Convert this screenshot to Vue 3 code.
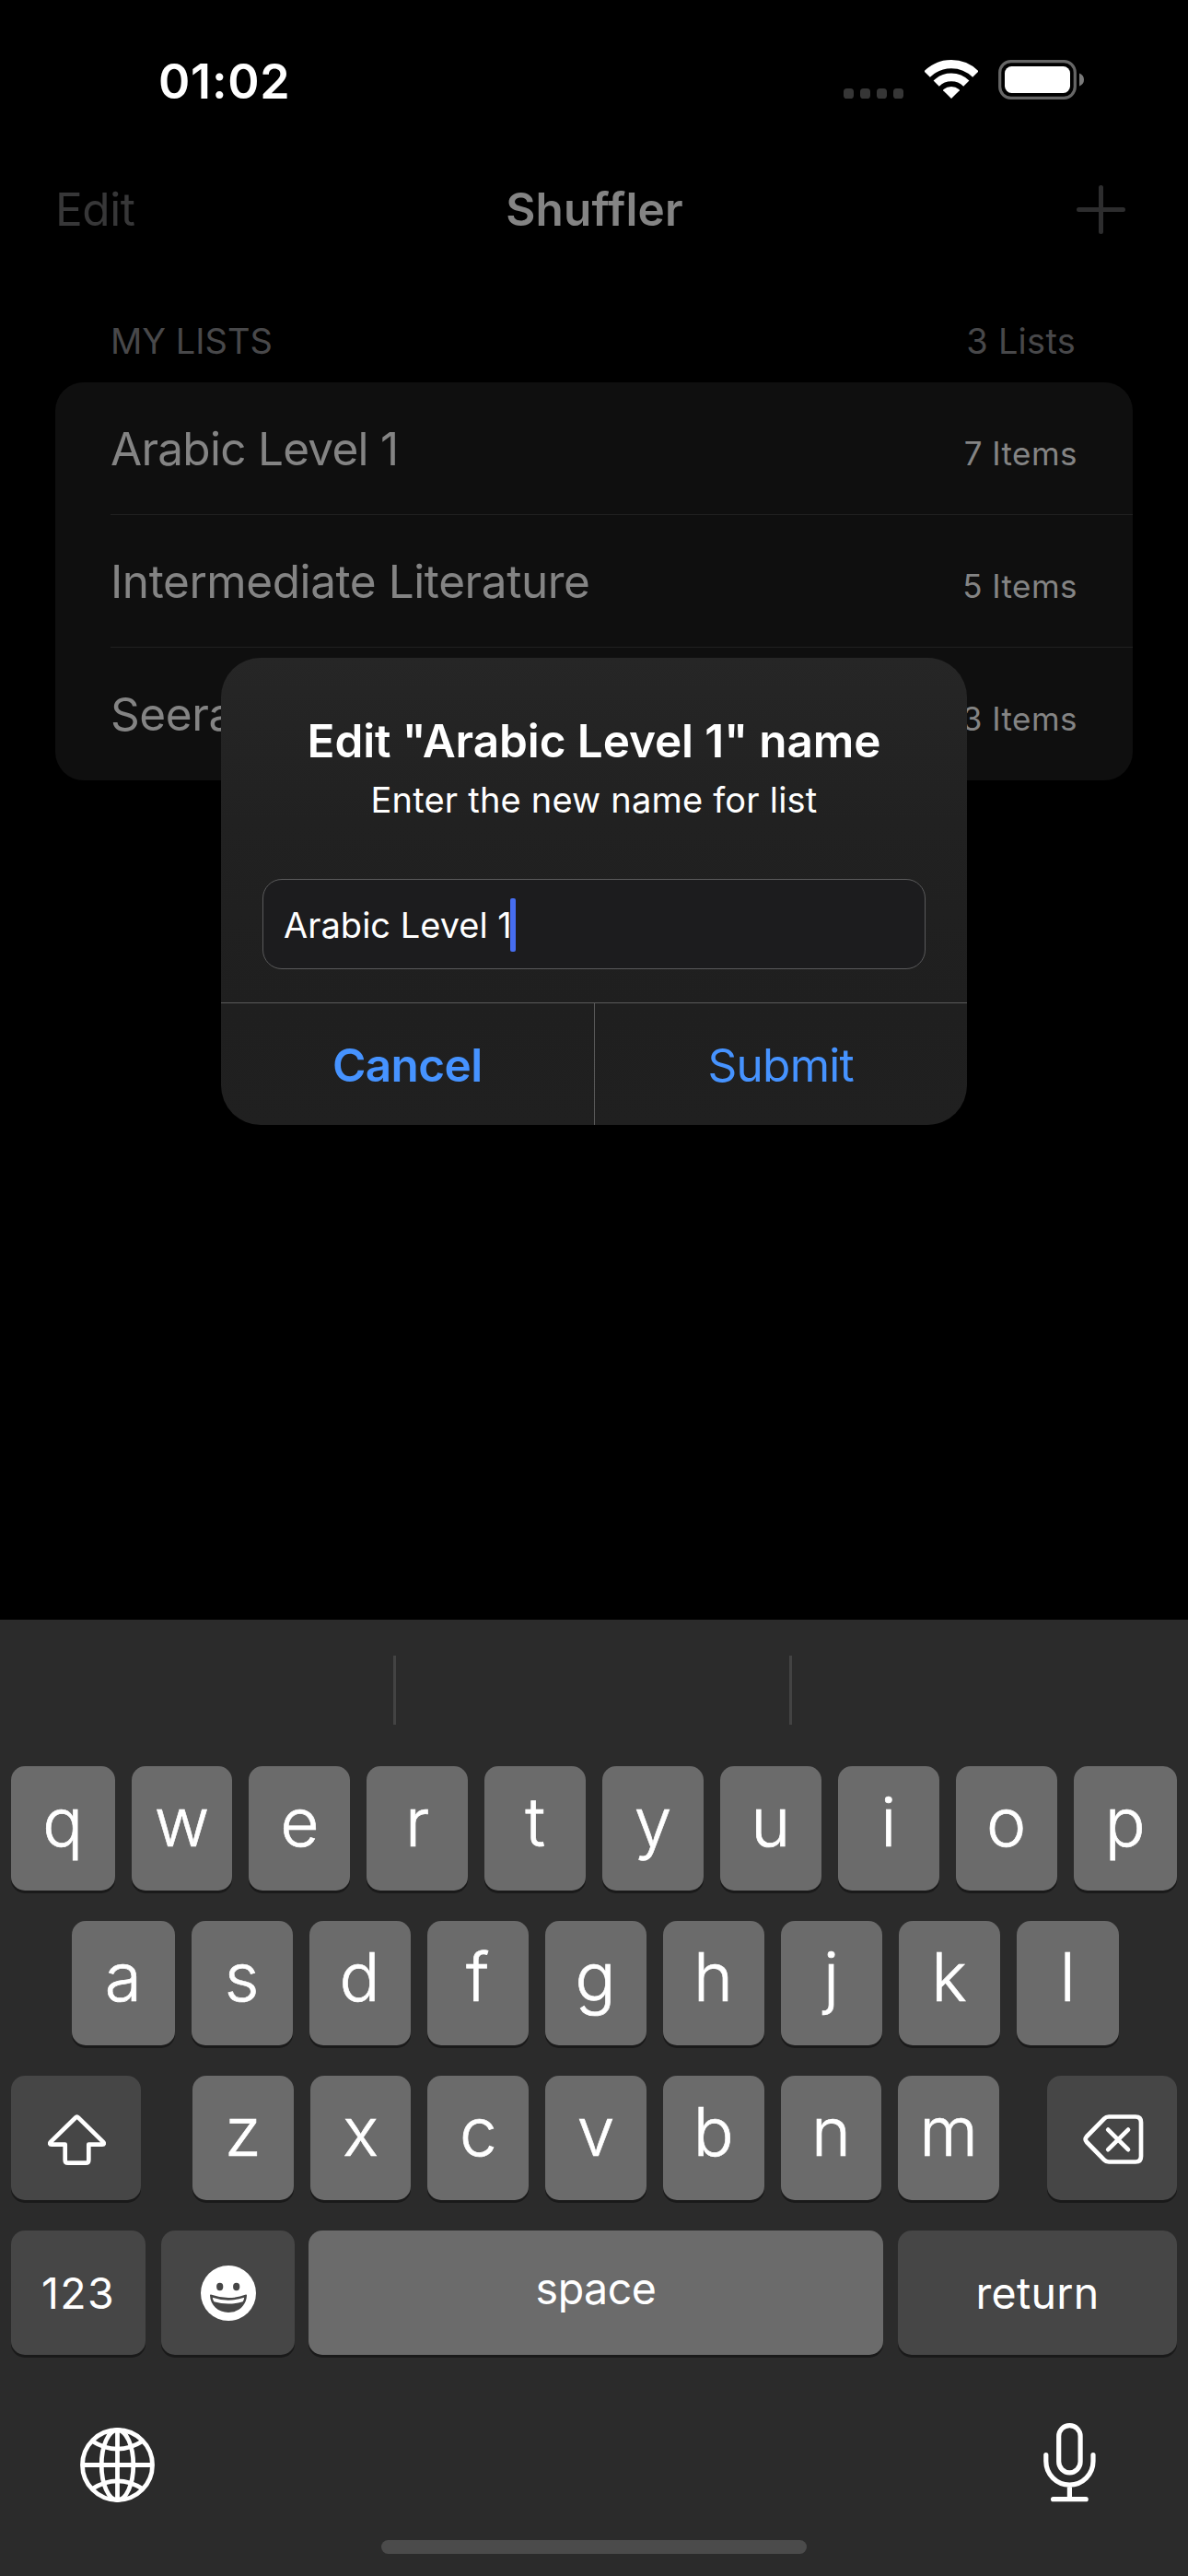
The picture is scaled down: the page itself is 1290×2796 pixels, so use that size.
<script setup>
const lists = [
  { name: 'Arabic Level 1', count: '7 Items', tight: true },
  { name: 'Intermediate Literature', count: '5 Items' },
  { name: 'Seerah', count: '3 Items' },
]
const topRow = [...'qwertyuiop']
const homeRow = [...'asdfghjkl']
const bottomRow = [...'zxcvbnm']
</script>

<template>
  <div class="screen">
    <header class="status">
      <span class="time">01:02</span>
      <div class="indicators">
        <svg class="cell" width="65" height="11" viewBox="0 0 65 11">
          <rect v-for="i in 4" :key="i" :x="(i - 1) * 18" y="0" width="11" height="11" rx="3.6" fill="#363636" />
        </svg>
        <svg class="wifi" width="58" height="42" viewBox="0 0 58 42">
          <path d="M2.6 15.6A37.3 37.3 0 0 1 55.4 15.6" fill="none" stroke="#fff" stroke-width="9.2" />
          <path d="M12.7 25.7A23 23 0 0 1 45.3 25.7" fill="none" stroke="#fff" stroke-width="8.8" />
          <path d="M29 42L20.2 33.2Q19.8 32.6 20.6 31.9A13.2 13.2 0 0 1 37.4 31.9Q38.2 32.6 37.8 33.2Z" fill="#fff" />
        </svg>
        <svg width="93" height="43" viewBox="0 0 93 43">
          <rect x="1.7" y="1.7" width="81.6" height="39.6" rx="12" fill="none" stroke="#666" stroke-width="3.2" />
          <rect x="7" y="7" width="71" height="29" rx="7.5" fill="#fff" />
          <path d="M88 14.5Q93 16.5 93 21.5T88 28.5Z" fill="#7a7a7a" />
        </svg>
      </div>
    </header>

    <nav class="nav">
      <span class="edit">Edit</span>
      <h1 class="title">Shuffler</h1>
      <svg class="add" width="53" height="53" viewBox="0 0 53 53">
        <path d="M26.5 2.5V50.5M2.5 26.5H50.5" stroke="#2d2d2e" stroke-width="5" stroke-linecap="round" />
      </svg>
    </nav>

    <div class="section-head">
      <span>MY LISTS</span>
      <span class="total">3 Lists</span>
    </div>
    <ul class="card">
      <li v-for="l in lists" :key="l.name" class="row">
        <span class="name" :class="{ tight: l.tight }">{{ l.name }}</span>
        <span class="count">{{ l.count }}</span>
      </li>
    </ul>

    <div class="alert">
      <h2 class="alert-title">Edit "Arabic Level 1" name</h2>
      <p class="alert-text">Enter the new name for list</p>
      <div class="field"><span>Arabic Level 1</span><i class="caret"></i></div>
      <div class="actions">
        <div class="action cancel">Cancel</div>
        <div class="action submit">Submit</div>
      </div>
    </div>

    <section class="keyboard">
      <div class="predictions"><span></span><span></span><span></span></div>
      <div class="keys">
        <div class="krow first">
          <div v-for="k in topRow" :key="k" class="key">{{ k }}</div>
        </div>
        <div class="krow second">
          <div v-for="k in homeRow" :key="k" class="key">{{ k }}</div>
        </div>
        <div class="krow third">
          <div class="key dark side">
            <svg class="shift" width="63" height="55" viewBox="0 0 63 55">
              <path d="M29.8 3.7Q31.5 2 33.2 3.7L60 29.9Q62 32.6 59 32.6H44.3V49.4Q44.3 52.6 41.1 52.6H21.9Q18.7 52.6 18.7 49.4V32.6H4Q1 32.6 3 29.9Z" fill="none" stroke="#fff" stroke-width="4.7" stroke-linejoin="round" />
            </svg>
          </div>
          <div class="letters">
            <div v-for="k in bottomRow" :key="k" class="key">{{ k }}</div>
          </div>
          <div class="key dark side">
            <svg class="delete" width="66" height="54" viewBox="0 0 66 54">
              <g fill="none" stroke="#fff" stroke-width="4.7" stroke-linecap="round" stroke-linejoin="round">
                <path d="M28 2.5H57Q63 2.5 63 8.5V45.5Q63 51.5 57 51.5H28Q25 51.5 23 49.4L4 30Q1.4 27 4 24L23 4.6Q25 2.5 28 2.5Z" />
                <path d="M27.2 16.6L49 38.2M49 16.6L27.2 38.2" />
              </g>
            </svg>
          </div>
        </div>
        <div class="krow fourth">
          <div class="key dark label numbers">123</div>
          <div class="key dark emoji">
            <svg width="60" height="60" viewBox="0 0 60 60">
              <circle cx="30" cy="30" r="30" fill="#fff" />
              <ellipse cx="20.7" cy="23" rx="3.6" ry="4.2" fill="#464646" />
              <ellipse cx="38.7" cy="23" rx="3.6" ry="4.2" fill="#464646" />
              <path d="M11 31.6Q30 38.4 49 31.6Q50 31.4 50 32.6C49.5 43.5 41 51 30 51S10.5 43.5 10 32.6Q10 31.4 11 31.6Z" fill="#464646" />
              <path d="M12.8 34.8Q30 40.6 47.2 34.8Q47 37.6 45.6 39.2Q30 44 14.4 39.2Q13 37.6 12.8 34.8Z" fill="#fff" />
            </svg>
          </div>
          <div class="key label space">space</div>
          <div class="key dark label return">return</div>
        </div>
      </div>
      <div class="tools">
        <svg class="globe" width="81" height="81" viewBox="0 0 81 81">
          <g fill="none" stroke="#fff" stroke-width="4.8">
            <circle cx="40.5" cy="40.5" r="38" />
            <ellipse cx="40.5" cy="40.5" rx="17.3" ry="38" />
            <path d="M40.5 2.5V78.5M2.5 40.5H78.5" />
            <path d="M13 14.5Q40.5 31.8 68 14.5M13 66.5Q40.5 49.2 68 66.5" />
          </g>
        </svg>
        <svg class="mic" width="57" height="86" viewBox="0 0 57 86">
          <g fill="none" stroke="#fff" stroke-width="5.2" stroke-linecap="round">
            <rect x="16.7" y="2.6" width="23.4" height="51.2" rx="11.7" />
            <path d="M2.8 34.5V41.5A25.6 25.6 0 0 0 54 41.5V34.5M28.4 67.5V82.7M10.6 82.7H46.2" />
          </g>
        </svg>
      </div>
      <div class="home"></div>
    </section>
  </div>
</template>

<style>
body {
  background: #000;
}
</style>

<style scoped>
.screen {
  position: relative;
  display: flex;
  flex-direction: column;
  width: 1290px;
  height: 2796px;
  overflow: hidden;
  background: #000;
  color: #fff;
  font-family: Inter, "Liberation Sans", sans-serif;
  white-space: nowrap;
}
h1, h2, p, ul {
  margin: 0;
  padding: 0;
}
svg {
  display: block;
  flex: none;
}

.status {
  display: flex;
  justify-content: space-between;
  align-items: flex-start;
  height: 176px;
  padding: 0 113px 0 172px;
}
.time {
  font-size: 52px;
  font-weight: 600;
  line-height: 178px;
  letter-spacing: 0.8px;
}
.indicators {
  display: flex;
  margin-top: 65px;
}
.cell {
  margin: 31px 23px 0 0;
}
.wifi {
  margin-right: 22px;
}

.nav {
  display: grid;
  grid-template-columns: 1fr auto 1fr;
  align-items: center;
  height: 102px;
  padding: 0 68px 0 60px;
  font-size: 49.5px;
  line-height: 102px;
}
.edit {
  color: #373738;
  letter-spacing: -0.4px;
}
.title {
  margin-left: 9px;
  font-size: 49.5px;
  font-weight: 600;
  letter-spacing: 0.2px;
  color: #848484;
}
.add {
  justify-self: end;
}

.section-head {
  display: flex;
  justify-content: space-between;
  height: 75px;
  padding: 62px 122px 0 120px;
  font-size: 38px;
  line-height: 60px;
  color: #48484a;
}
.total {
  letter-spacing: 0.25px;
}
.card {
  width: 1170px;
  margin: 0 60px;
  border-radius: 31px;
  background: #0f0f0f;
  color: #848484;
  list-style: none;
}
.row {
  display: flex;
  justify-content: space-between;
  align-items: baseline;
  box-sizing: border-box;
  height: 144px;
  margin-left: 60px;
  padding-right: 60px;
  border-bottom: 1px solid #202020;
  line-height: 144px;
}
.row:last-child {
  border-bottom: 0;
}
.name {
  font-size: 49.5px;
  letter-spacing: -0.43px;
}
.name.tight {
  letter-spacing: -0.74px;
}
.count {
  font-size: 35px;
  letter-spacing: 0.45px;
}

.alert {
  position: absolute;
  top: 714px;
  left: 240px;
  display: flex;
  flex-direction: column;
  width: 810px;
  height: 507px;
  border-radius: 43px;
  background: linear-gradient(#262626, #212121 35%, #1f1f1f 75%, #202020);
  text-align: center;
  overflow: hidden;
}
.alert-title {
  margin-top: 60px;
  font-size: 49.5px;
  font-weight: 600;
  line-height: 60px;
  letter-spacing: -0.1px;
}
.alert-text {
  margin-top: 9px;
  font-size: 38px;
  line-height: 50px;
  letter-spacing: 0.2px;
}
.field {
  display: flex;
  flex: none;
  align-items: center;
  box-sizing: border-box;
  height: 98px;
  margin: 61px 45px 36px;
  padding: 2px 0 0 22px;
  border: 1px solid #5a5a5b;
  border-radius: 21px;
  background: #1c1c1e;
  font-size: 38px;
}
.caret {
  width: 6px;
  height: 58px;
  margin-left: -1.5px;
  border-radius: 2px;
  background: #466df0;
}
.actions {
  display: flex;
  flex: none;
  box-sizing: border-box;
  height: 133px;
  border-top: 1px solid #5a5a5a;
}
.action {
  flex: 1;
  font-size: 49.5px;
  line-height: 135px;
  color: #4693ff;
}
.cancel {
  font-weight: 600;
  letter-spacing: -0.6px;
  border-right: 1px solid #5a5a5a;
}
.submit {
  letter-spacing: -0.75px;
}

.keyboard {
  display: flex;
  flex-direction: column;
  height: 1038px;
  margin-top: auto;
  background: #2b2b2b;
}
.predictions {
  display: flex;
  height: 75px;
  margin: 39px 0 45px;
}
.predictions span {
  box-sizing: border-box;
  width: 430px;
  border-right: 3px solid #434343;
}
.predictions span:last-child {
  border: 0;
}
.keys {
  display: flex;
  flex-direction: column;
  gap: 33px;
}
.krow {
  display: flex;
  height: 135px;
  padding: 0 12px;
}
.key {
  display: flex;
  flex: 1;
  justify-content: center;
  height: 135px;
  border-radius: 15px;
  background: #6b6b6b;
  box-shadow: 0 3px 0 #1a1a1a;
  font-size: 73px;
  font-weight: 300;
  line-height: 121px;
  -webkit-text-stroke: 0.7px #fff;
}
.key.dark {
  align-items: center;
  background: #464646;
}
.first,
.second,
.letters {
  gap: 18px;
}
.first .key:first-child,
.first .key:last-child {
  flex: 0 0 112.5px;
}
.second {
  padding: 0 75px 0 78px;
}
.second .key:first-child,
.second .key:last-child {
  flex: 0 0 111.5px;
}
.letters {
  display: flex;
  flex: 1;
  margin: 0 52px 0 56px;
}
.key.side {
  flex: 0 0 141px;
}
.shift,
.delete {
  margin: 3px 0 0 2px;
}
.key.label {
  font-size: 46.5px;
  font-weight: 400;
  line-height: 134px;
  -webkit-text-stroke: 0;
}
.key.numbers {
  flex: 0 0 146px;
  margin-right: 17px;
  letter-spacing: 1.4px;
}
.key.emoji {
  flex: 0 0 145px;
  margin-right: 15px;
}
.key.space {
  margin-right: 16px;
  line-height: 126px;
  letter-spacing: -0.5px;
}
.key.return {
  flex: 0 0 303px;
  letter-spacing: 0.3px;
}
.tools {
  display: flex;
  justify-content: space-between;
  box-sizing: border-box;
  height: 201px;
  padding: 74px 100px 0 87px;
}
.globe {
  margin-top: 5px;
}
.home {
  width: 462px;
  height: 15px;
  margin: 0 auto;
  border-radius: 8px;
  background: #4b4b4b;
}
</style>
